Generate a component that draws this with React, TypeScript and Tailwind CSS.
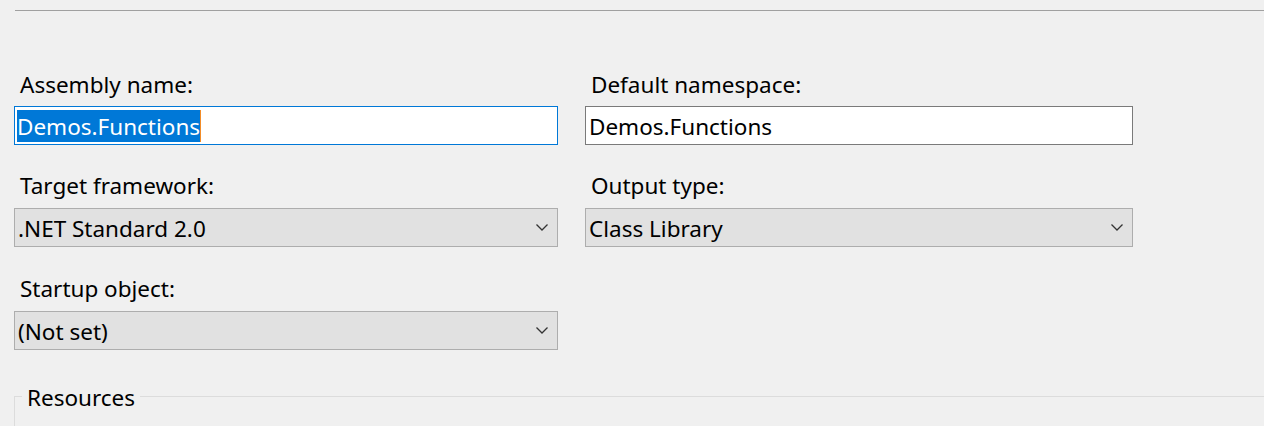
import React from "react";

const font = { fontFamily: '"Noto Sans", "Open Sans", sans-serif' };

function Chevron() {
  return (
    <svg width="12" height="7" viewBox="0 0 12 7" className="shrink-0">
      <path d="M0.5 0.5 L6 6 L11.5 0.5" fill="none" stroke="#333" strokeWidth="1.3" />
    </svg>
  );
}

function Label({ children }: { children: React.ReactNode }) {
  return <div className="h-[26px] pl-[6px] pt-[1px] leading-[26px] text-[22.5px] text-black">{children}</div>;
}

function Select({ value }: { value: string }) {
  return (
    <div className="mt-[10px] flex h-[39px] items-center justify-between border border-[#adadad] bg-[#e1e1e1] pl-[3px] pr-[9px] text-[22.5px] text-black">
      <span className="pt-[3px]">{value}</span>
      <Chevron />
    </div>
  );
}

export default function App() {
  return (
    <div className="h-[426px] w-[1264px] overflow-hidden bg-[#f0f0f0]" style={font}>
      <div className="ml-[15px] mt-[10px] border-t border-[#a0a0a0]" />
      <div className="mt-[60px] grid grid-cols-[544px_548px] gap-x-[27px] pl-[14px]">
        <div>
          <Label>Assembly name:</Label>
          <div className="mt-[9px] flex h-[39px] items-center border border-[#0078d7] bg-white pl-[2px] text-[22.5px]">
            <span className="bg-[#0078d7] pt-[1px] leading-[31px] text-white">Demos.Functions</span>
            <span className="h-[32px] w-px bg-[#f28c28]" />
          </div>
        </div>
        <div>
          <Label>Default namespace:</Label>
          <div className="mt-[9px] flex h-[39px] items-center border border-[#7a7a7a] bg-white pl-[3px] pt-[2px] text-[22.5px] text-black">
            Demos.Functions
          </div>
        </div>
        <div className="mt-[27px]">
          <Label>Target framework:</Label>
          <Select value=".NET Standard 2.0" />
        </div>
        <div className="mt-[27px]">
          <Label>Output type:</Label>
          <Select value="Class Library" />
        </div>
        <div className="mt-[28px]">
          <Label>Startup object:</Label>
          <Select value="(Not set)" />
        </div>
        <div />
      </div>
      <div className="relative mt-[46px] ml-[14px] h-[40px] border-l border-t border-[#dcdcdc]">
        <span className="absolute left-[7px] top-[-12px] bg-[#f0f0f0] px-[5px] text-[22.5px] leading-[26px] text-black">
          Resources
        </span>
      </div>
    </div>
  );
}
